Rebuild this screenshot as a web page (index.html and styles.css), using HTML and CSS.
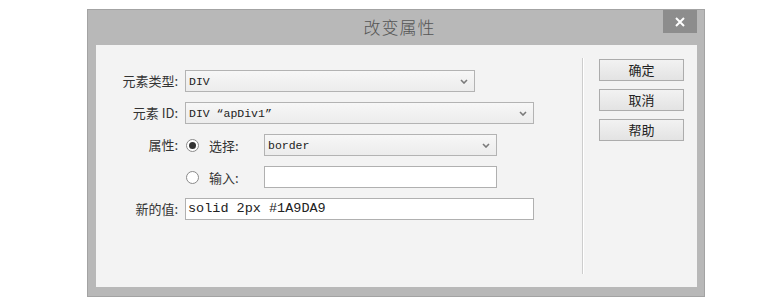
FILE: index.html
```html
<!DOCTYPE html>
<html lang="zh">
<head>
    <meta charset="UTF-8">
    <title>改变属性</title>
    <link rel="stylesheet" href="styles.css">
</head>
<body>
    <div class="window">
        <div class="titlebar">
            <span class="title">改变属性</span>
            <div class="close">
                <svg width="10" height="10" viewBox="0 0 10 10"><path d="M1 1L9 9M9 1L1 9" stroke="#fff" stroke-width="2"/></svg>
            </div>
        </div>

        <div class="panel">
            <div class="form">
                <label class="label">元素类型:</label>
                <div class="field">
                    <div class="select w1">
                        <span>DIV</span>
                        <svg class="chev" width="8" height="5" viewBox="0 0 8 5"><path d="M1 1L4 4L7 1" fill="none" stroke="#7a7a7a" stroke-width="1.6"/></svg>
                    </div>
                </div>

                <label class="label">元素 ID:</label>
                <div class="field">
                    <div class="select w2">
                        <span>DIV “apDiv1”</span>
                        <svg class="chev" width="8" height="5" viewBox="0 0 8 5"><path d="M1 1L4 4L7 1" fill="none" stroke="#7a7a7a" stroke-width="1.6"/></svg>
                    </div>
                </div>

                <label class="label">属性:</label>
                <div class="field">
                    <span class="radio checked"></span>
                    <span class="opt">选择:</span>
                    <div class="select w3">
                        <span>border</span>
                        <svg class="chev" width="8" height="5" viewBox="0 0 8 5"><path d="M1 1L4 4L7 1" fill="none" stroke="#7a7a7a" stroke-width="1.6"/></svg>
                    </div>
                </div>

                <label class="label"></label>
                <div class="field">
                    <span class="radio"></span>
                    <span class="opt">输入:</span>
                    <div class="input w3"></div>
                </div>

                <label class="label">新的值:</label>
                <div class="field">
                    <div class="input w2 value">solid 2px #1A9DA9</div>
                </div>
            </div>

            <div class="sep"></div>

            <div class="buttons">
                <button class="btn">确定</button>
                <button class="btn">取消</button>
                <button class="btn">帮助</button>
            </div>
        </div>
    </div>
</body>
</html>
```

FILE: styles.css
```css
* {
    box-sizing: border-box;
}

html, body {
    margin: 0;
    padding: 0;
    background: #ffffff;
    font-family: "Noto Sans CJK SC", "DejaVu Sans", sans-serif;
}

/* WINDOW */
.window {
    margin: 9px 0 0 87px;
    width: 618px;
    height: 288px;
    background: #b8b8b8;
    border: 1px solid #a3a3a3;
    padding: 0 7px 9px 8px;
    display: flex;
    flex-direction: column;
}

.titlebar {
    height: 35px;
    position: relative;
    text-align: center;
}

.title {
    display: inline-block;
    margin-top: 4px;
    font-size: 17px;
    font-weight: 300;
    line-height: 26px;
    letter-spacing: 1px;
    color: #555555;
    padding-left: 6px;
}

.close {
    position: absolute;
    top: 0;
    right: 0;
    width: 34px;
    height: 23px;
    background: #8d8d8d;
    display: flex;
    align-items: center;
    justify-content: center;
}

/* PANEL */
.panel {
    flex: 1;
    background: #f3f3f3;
    display: flex;
    padding: 13px 0;
}

.form {
    width: 486px;
    padding-top: 12px;
    display: grid;
    grid-template-columns: 82px 1fr;
    column-gap: 7px;
    row-gap: 10px;
    align-content: start;
}

.label {
    height: 22px;
    line-height: 22px;
    text-align: right;
    font-size: 13px;
    color: #333333;
}

.field {
    height: 22px;
    display: flex;
    align-items: center;
}

.select {
    height: 22px;
    border: 1px solid #b3b3b3;
    background: linear-gradient(#f7f7f7, #ececec);
    display: flex;
    align-items: center;
    justify-content: space-between;
    padding: 0 6px 0 3px;
    font-family: "Liberation Mono", monospace;
    font-size: 11.5px;
    color: #222222;
}

.chev {
    margin-top: 1px;
}

.input {
    height: 22px;
    border: 1px solid #b0b0b0;
    background: #ffffff;
}

.value {
    padding-left: 2px;
    font-family: "Liberation Mono", monospace;
    font-size: 13.5px;
    line-height: 20px;
    color: #222222;
}

.w1 { width: 290px; }
.w2 { width: 349px; }
.w3 { width: 233px; }

.radio {
    width: 13px;
    height: 13px;
    margin-left: 1px;
    border-radius: 50%;
    border: 1px solid #8a8a8a;
    background: #ffffff;
    position: relative;
}

.radio.checked::after {
    content: "";
    position: absolute;
    top: 2px;
    left: 2px;
    width: 7px;
    height: 7px;
    border-radius: 50%;
    background: #333333;
}

.opt {
    width: 65px;
    padding-left: 10px;
    font-size: 13px;
    color: #333333;
}

.sep {
    width: 2px;
    border-left: 1px solid #cdcdcd;
    border-right: 1px solid #ffffff;
}

/* BUTTONS */
.buttons {
    margin-left: 15px;
    padding-top: 1px;
    display: flex;
    flex-direction: column;
    gap: 8px;
}

.btn {
    width: 85px;
    height: 22px;
    padding: 0;
    border: 1px solid #acacac;
    background: linear-gradient(#f2f2f2, #e3e3e3);
    font-family: "Noto Sans CJK SC", sans-serif;
    font-size: 13px;
    line-height: 20px;
    color: #222222;
}
```
